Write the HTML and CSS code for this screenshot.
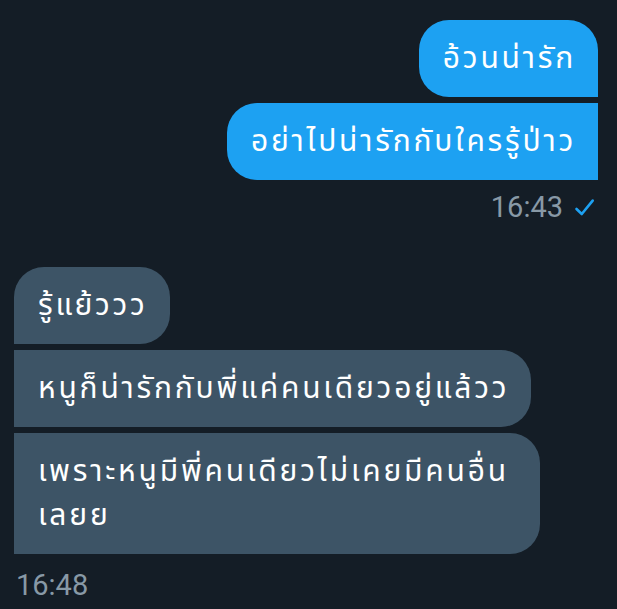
FILE: index.html
```html
<!DOCTYPE html>
<html lang="th">
<head>
<meta charset="utf-8">
<link rel="stylesheet" href="styles.css">
</head>
<body>
<div class="chat">
  <div class="group sent">
    <div class="bubble first">อ้วนน่ารัก</div>
    <div class="bubble last">อย่าไปน่ารักกับใครรู้ป่าว</div>
    <div class="meta">
      <span class="time">16:43</span>
      <svg class="check" viewBox="0 0 20 20" width="21" height="21"><path d="M2.4 11.4 L7.4 16.2 L17.8 3.4" fill="none" stroke="#1da1f2" stroke-width="2.5" stroke-linecap="round" stroke-linejoin="round"/></svg>
    </div>
  </div>
  <div class="group received">
    <div class="bubble first">รู้แย้ววว</div>
    <div class="bubble">หนูก็น่ารักกับพี่แค่คนเดียวอยู่แล้วว</div>
    <div class="bubble last">เพราะหนูมีพี่คนเดียวไม่เคยมีคนอื่นเลยย</div>
    <div class="meta">
      <span class="time">16:48</span>
    </div>
  </div>
</div>
</body>
</html>
```
FILE: styles.css
```css
html, body {
  margin: 0;
  padding: 0;
  background: #141d26;
}
.chat {
  width: 617px;
  height: 609px;
  overflow: hidden;
  box-sizing: border-box;
  padding: 20px 19px 0 14px;
  font-family: "Noto Sans Thai", "Noto Sans", "DejaVu Sans", sans-serif;
}
.group {
  display: flex;
  flex-direction: column;
  gap: 6px;
}
.sent {
  align-items: flex-end;
}
.received {
  align-items: flex-start;
  margin-top: 44px;
}
.bubble {
  box-sizing: border-box;
  max-width: 526px;
  padding: 17px 22px 16px 24px;
  font-size: 30px;
  letter-spacing: 2.8px;
  line-height: 44px;
  color: #ffffff;
  border-radius: 30px;
}
.sent .bubble {
  background: #1da1f2;
  border-top-right-radius: 0;
  border-bottom-right-radius: 0;
}
.sent .bubble.first {
  border-top-right-radius: 30px;
}
.received .bubble {
  background: #3d5466;
  border-top-left-radius: 0;
  border-bottom-left-radius: 0;
}
.received .bubble.first {
  border-top-left-radius: 30px;
}
.meta {
  display: flex;
  align-items: center;
  gap: 11px;
  margin-top: 5px;
  font-family: Roboto, "Liberation Sans", sans-serif;
  font-size: 29px;
  line-height: 32px;
  color: #8899a6;
}
.sent .meta {
  margin-right: 3px;
}
.received .meta {
  margin-top: 9px;
  margin-left: 2px;
}
.check {
  display: block;
}
```
